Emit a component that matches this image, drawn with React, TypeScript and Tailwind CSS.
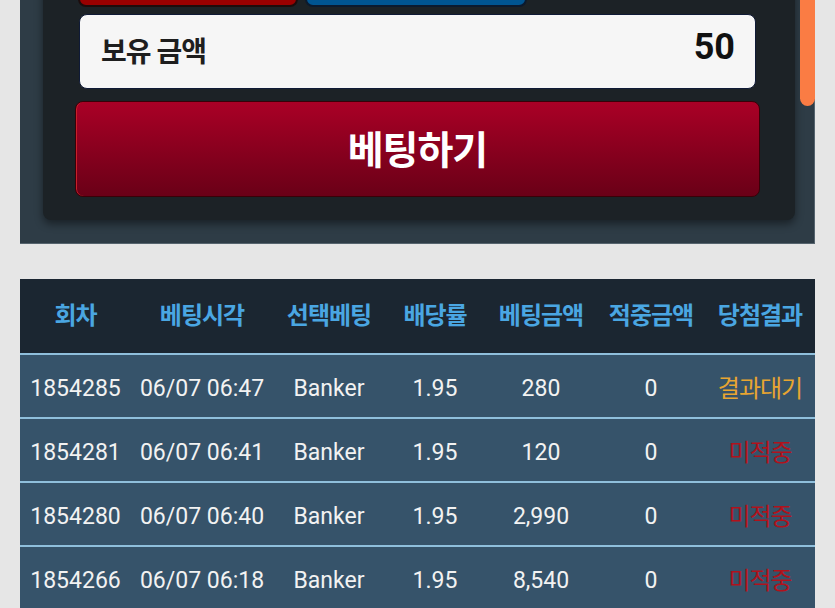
import React from "react";

const cols = ["w-[111px]", "w-[142px]", "w-[112px]", "w-[100px]", "w-[112px]", "w-[108px]", "w-[110px]"];
const headers = ["회차", "베팅시각", "선택베팅", "배당률", "베팅금액", "적중금액", "당첨결과"];

type Row = { id: string; time: string; pick: string; odds: string; amt: string; win: string; result: string; pending: boolean };
const rows: Row[] = [
  { id: "1854285", time: "06/07 06:47", pick: "Banker", odds: "1.95", amt: "280", win: "0", result: "결과대기", pending: true },
  { id: "1854281", time: "06/07 06:41", pick: "Banker", odds: "1.95", amt: "120", win: "0", result: "미적중", pending: false },
  { id: "1854280", time: "06/07 06:40", pick: "Banker", odds: "1.95", amt: "2,990", win: "0", result: "미적중", pending: false },
  { id: "1854266", time: "06/07 06:18", pick: "Banker", odds: "1.95", amt: "8,540", win: "0", result: "미적중", pending: false },
];

export default function App() {
  return (
    <div
      className="relative w-[835px] h-[608px] overflow-hidden bg-[#e6e6e6]"
      style={{ fontFamily: '"Roboto", "Noto Sans CJK KR", sans-serif' }}
    >
      {/* top panel */}
      <div className="ml-[20px] w-[795px] -mt-[80px] bg-[#2e3c46] border-r border-b border-[#56646e] pt-[20px] pb-[23px]">
        <div className="ml-[23px] w-[752px] bg-[#1c2226] rounded-[8px] shadow-[0_4px_8px_rgba(0,0,0,0.45)] pl-[32px] pr-[35px] pt-[20px] pb-[23px]">
          <div className="flex gap-[7px] pl-[3px] h-[47px]">
            <div className="w-[220px] h-full bg-[#990000] border-2 border-[#1d0c0c] rounded-[8px]" />
            <div className="w-[222px] h-full bg-[#005591] border-2 border-[#0b1a2e] rounded-[8px]" />
          </div>
          <div className="mt-[7px] mx-[4px] h-[75px] bg-[#f6f6f6] rounded-[8px] border border-[#0f1a36] flex items-center justify-between pl-[21px] pr-[20px]">
            <span className="text-[28px] font-bold text-[#1e1e1e] tracking-[-1px] mt-[2px]">보유 금액</span>
            <span className="text-[36px] font-bold text-[#111] mb-[10px]" style={{ fontFamily: "Roboto, sans-serif" }}>50</span>
          </div>
          <div className="mt-[12px] h-[96px] rounded-[8px] border border-[#3a0008] bg-gradient-to-b from-[#aa0026] to-[#6a0017] flex items-center justify-center shadow-[inset_1px_0_0_#c8202a]">
            <span className="text-[39px] font-bold text-white tracking-[-1px] mt-[4px]">베팅하기</span>
          </div>
        </div>
      </div>

      {/* scrollbar */}
      <div className="absolute left-[800px] top-0 w-[15px] h-[106px] bg-[#fa7c44] rounded-b-full" />

      {/* table */}
      <div className="ml-[20px] mt-[35px] w-[795px]">
        <div className="flex h-[76px] bg-[#1b2631] items-center border-b-2 border-[#8fbfdc]">
          {headers.map((h, i) => (
            <div key={h} className={`${cols[i]} text-center text-[24px] font-bold text-[#4aa6e2] tracking-[-1px]`}>
              {h}
            </div>
          ))}
        </div>
        {rows.map((r) => (
          <div key={r.id} className="flex h-[64px] bg-[#36536a] items-center border-b-2 border-[#8fbfdc] text-[#f2f2f2] text-[23px] pt-[6px]">
            <div className={`${cols[0]} text-center`}>{r.id}</div>
            <div className={`${cols[1]} text-center`}>{r.time}</div>
            <div className={`${cols[2]} text-center`}>{r.pick}</div>
            <div className={`${cols[3]} text-center`}>{r.odds}</div>
            <div className={`${cols[4]} text-center`}>{r.amt}</div>
            <div className={`${cols[5]} text-center`}>{r.win}</div>
            <div
              className={`${cols[6]} text-center text-[24px] tracking-[-1px] ${r.pending ? "text-[#e8a531]" : "text-[#b0121c]"}`}
            >
              {r.result}
            </div>
          </div>
        ))}
      </div>
    </div>
  );
}
